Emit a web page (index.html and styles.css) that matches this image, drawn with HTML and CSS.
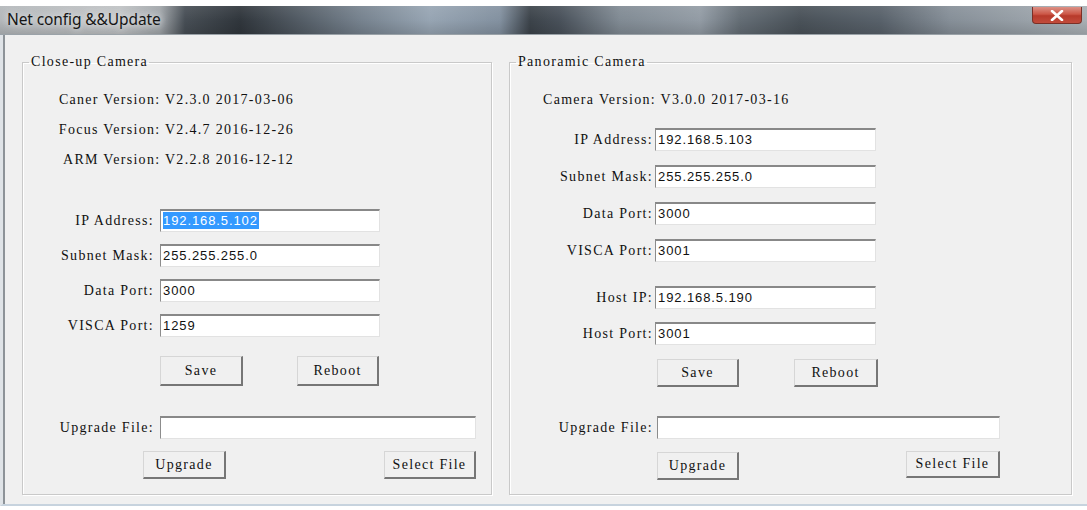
FILE: index.html
```html
<!DOCTYPE html>
<html lang="en">
<head>
<meta charset="utf-8">
<title>Net config &amp;&amp;Update</title>
<link rel="stylesheet" href="styles.css">
</head>
<body>
<div class="window">
  <div class="titlebar">
    <span class="title">Net config &amp;&amp;Update</span>
    <div class="close">
      <svg width="14" height="11" viewBox="0 0 14 11"><path d="M2 1 L12 10 M12 1 L2 10" stroke="#fff" stroke-width="2.6" stroke-linecap="round"/></svg>
    </div>
  </div>
  <div class="client">
    <fieldset class="group group-left">
      <legend>Close-up Camera</legend>
      <div class="versions versions-left">
        <div class="ver">Caner Version: V2.3.0 2017-03-06</div>
        <div class="ver">Focus Version: V2.4.7 2016-12-26</div>
        <div class="ver">ARM Version: V2.2.8 2016-12-12</div>
      </div>
      <div class="fields fields-left">
        <div class="field"><span class="lbl">IP Address:</span><div class="input"><span class="sel">192.168.5.102</span></div></div>
        <div class="field"><span class="lbl">Subnet Mask:</span><div class="input">255.255.255.0</div></div>
        <div class="field"><span class="lbl">Data Port:</span><div class="input">3000</div></div>
        <div class="field"><span class="lbl">VISCA Port:</span><div class="input">1259</div></div>
      </div>
      <div class="btnrow btnrow-left">
        <div class="btn btn-save">Save</div>
        <div class="btn btn-reboot">Reboot</div>
      </div>
      <div class="field upfield-left"><span class="lbl">Upgrade File:</span><div class="input input-file"></div></div>
      <div class="btnrow2 btnrow2-left">
        <div class="btn btn-upgrade">Upgrade</div>
        <div class="btn btn-select">Select File</div>
      </div>
    </fieldset>
    <fieldset class="group group-right">
      <legend>Panoramic Camera</legend>
      <div class="versions versions-right">
        <div class="ver">Camera Version: V3.0.0 2017-03-16</div>
      </div>
      <div class="fields fields-right">
        <div class="field"><span class="lbl">IP Address:</span><div class="input">192.168.5.103</div></div>
        <div class="field"><span class="lbl">Subnet Mask:</span><div class="input">255.255.255.0</div></div>
        <div class="field"><span class="lbl">Data Port:</span><div class="input">3000</div></div>
        <div class="field"><span class="lbl">VISCA Port:</span><div class="input">3001</div></div>
      </div>
      <div class="fields fields-host">
        <div class="field"><span class="lbl">Host IP:</span><div class="input">192.168.5.190</div></div>
        <div class="field"><span class="lbl">Host Port:</span><div class="input">3001</div></div>
      </div>
      <div class="btnrow btnrow-right">
        <div class="btn btn-save">Save</div>
        <div class="btn btn-reboot">Reboot</div>
      </div>
      <div class="field upfield-right"><span class="lbl">Upgrade File:</span><div class="input input-file"></div></div>
      <div class="btnrow2 btnrow2-right">
        <div class="btn btn-upgrade">Upgrade</div>
        <div class="btn btn-select">Select File</div>
      </div>
    </fieldset>
  </div>
</div>
</body>
</html>
```

FILE: styles.css
```css
* { box-sizing: border-box; }

body {
  margin: 0;
  background: #ffffff;
  font-family: "Liberation Serif", "DejaVu Serif", serif;
  font-size: 14px;
  letter-spacing: 1.3px;
  color: #111111;
}

.window {
  margin-top: 6px;
  height: 500px;
  display: flex;
  flex-direction: column;
}

.titlebar {
  height: 29px;
  flex: none;
  display: flex;
  justify-content: space-between;
  align-items: flex-start;
  background:
    linear-gradient(180deg, rgba(255,255,255,0.08) 0%, rgba(255,255,255,0) 50%, rgba(0,0,0,0.12) 100%),
    linear-gradient(90deg,
      #b3b7ba 0px, #bfc2c4 120px, #a0a5a9 160px, #474e55 185px, #30363c 240px,
      #535c65 300px, #76828e 360px, #97a5b3 430px, #8391a0 500px, #3c434a 530px,
      #49515a 560px, #818b94 620px, #939ca5 700px, #646d75 740px, #4a5259 800px,
      #58616a 880px, #868f98 950px, #9aa2a9 1030px, #aab0b5 1087px);
  border-bottom: 1px solid #9aa2a8;
}

.title {
  font-family: "Noto Sans", "Open Sans", sans-serif;
  font-size: 15.5px;
  letter-spacing: -0.1px;
  line-height: 26px;
  padding-left: 7px;
  color: #151515;
  text-shadow: 0 0 6px #e4e6e8, 0 0 10px #d8dadc;
}

.close {
  width: 50px;
  height: 17px;
  margin: 1px 5px 0 0;
  border-radius: 0 0 4px 4px;
  background: linear-gradient(180deg, #dc9186 0%, #cc5646 45%, #b73a2b 55%, #c24c3c 100%);
  border: 1px solid #7b2f26;
  border-top: none;
  display: flex;
  align-items: center;
  justify-content: center;
}

.client {
  flex: 1;
  background: #f0f0f0;
  display: flex;
  gap: 17px;
  padding: 20px 0 0 19px;
  border-left: 3px solid #dfe3e7;
  box-shadow: inset 2px 0 0 #8d9398;
  border-bottom: 2px solid #c7d3de;
}

.group {
  margin: 0;
  padding: 0;
  height: 440px;
  min-width: 0;
  border: 1px solid #c9c9c9;
  box-shadow: 1px 1px 0 #ffffff, inset 1px 1px 0 #ffffff;
  display: flex;
  flex-direction: column;
}

.group-left { width: 470px; }
.group-right { width: 563px; }

.group legend {
  margin-left: 6px;
  padding: 0 1px 0 2px;
  line-height: 14px;
}

.versions { margin-top: 16px; }
.ver { height: 30px; line-height: 30px; white-space: pre; }
.versions-left { width: 271px; text-align: right; }
.versions-right { padding-left: 33px; }

.fields { display: flex; flex-direction: column; }
.fields-left { margin-top: 34px; gap: 12px; }
.fields-right { margin-top: 13px; gap: 14px; }
.fields-host { margin-top: 24px; gap: 13px; }

.field { display: flex; align-items: center; height: 23px; }
.lbl { text-align: right; white-space: pre; flex: none; }

.fields-left .lbl, .upfield-left .lbl { width: 131px; margin-right: 6px; }
.fields-left .input { width: 220px; }
.fields-right .lbl, .fields-host .lbl { width: 143px; margin-right: 2px; }
.fields-right .input, .fields-host .input { width: 221px; }

.input {
  height: 23px;
  background: #ffffff;
  border-top: 2px solid #888888;
  border-left: 1px solid #8c8c8c;
  border-right: 1px solid #e2e2e2;
  border-bottom: 1px solid #e2e2e2;
  font-family: "Liberation Sans", Arial, sans-serif;
  font-size: 13px;
  letter-spacing: 0.9px;
  line-height: 19px;
  padding-left: 2px;
  color: #111;
  white-space: pre;
}

.sel {
  display: inline-block;
  background: #3399ff;
  color: #ffffff;
  line-height: 17px;
  padding-right: 1px;
}

.btn {
  display: flex;
  align-items: center;
  justify-content: center;
  background: #f0f0f0;
  border-top: 1px solid #d6d6d6;
  border-left: 1px solid #d6d6d6;
  border-right: 2px solid #767676;
  border-bottom: 2px solid #767676;
  white-space: pre;
}

.btnrow { display: flex; }
.btnrow-left { margin-top: 19px; height: 30px; padding-left: 137px; gap: 54px; }
.btnrow-left .btn-save { width: 83px; }
.btnrow-left .btn-reboot { width: 82px; }

.btnrow-right { margin-top: 14px; height: 28px; padding-left: 147px; gap: 55px; }
.btnrow-right .btn-save { width: 82px; }
.btnrow-right .btn-reboot { width: 84px; }

.upfield-left { margin-top: 30px; }
.upfield-left .input-file { width: 316px; }

.upfield-right { margin-top: 29px; }
.upfield-right .lbl { width: 143px; margin-right: 4px; }
.upfield-right .input-file { width: 343px; }

.btnrow2 { display: flex; margin-top: 12px; height: 28px; align-items: flex-start; }
.btnrow2-left { padding-left: 120px; gap: 158px; }
.btnrow2-left .btn-upgrade { width: 83px; height: 28px; }
.btnrow2-left .btn-select { width: 92px; height: 28px; }

.btnrow2-right { padding-left: 147px; gap: 167px; }
.btnrow2-right .btn-upgrade { width: 82px; height: 28px; margin-top: 1px; }
.btnrow2-right .btn-select { width: 94px; height: 27px; }
```
